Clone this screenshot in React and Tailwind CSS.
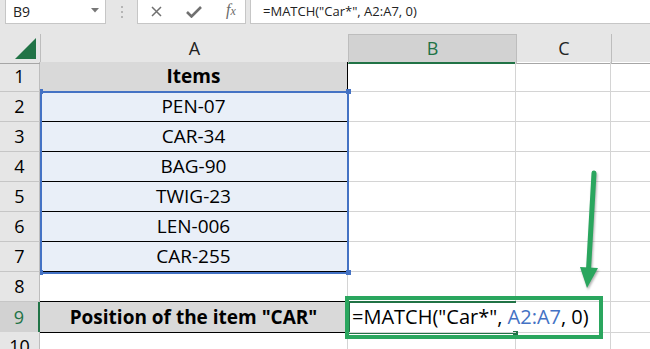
import React from 'react';

const rows = [
    { n: 1, a: 'Items', kind: 'head' },
    { n: 2, a: 'PEN-07', kind: 'item' },
    { n: 3, a: 'CAR-34', kind: 'item' },
    { n: 4, a: 'BAG-90', kind: 'item' },
    { n: 5, a: 'TWIG-23', kind: 'item' },
    { n: 6, a: 'LEN-006', kind: 'item' },
    { n: 7, a: 'CAR-255', kind: 'item' },
    { n: 8, a: '', kind: 'gap' },
    { n: 9, a: 'Position of the item "CAR"', kind: 'result' },
    { n: 10, a: '', kind: 'empty' },
];

const aCellClass = {
    head: 'bg-[#d9d9d9] font-bold border-r border-b border-black',
    item: 'bg-[#e9eff8] border-r border-b border-black',
    gap: 'border-r border-r-[#d4d4d4] border-b border-b-black',
    result: 'bg-[#d9d9d9] font-bold border-r border-b border-black',
    empty: 'border-r border-b border-[#d4d4d4]',
};

const FormulaBar = () => (
    <div className="flex h-6 items-stretch">
        {/* Name box */}
        <div className="ml-[5px] w-[101px] bg-white border-x border-b border-[#c6c6c6] flex items-center justify-between pl-[7px] pr-[6px]">
            <span className="text-[14px] text-[#222]">B9</span>
            <svg width="8" height="5" viewBox="0 0 8 5" className="mb-[2px]">
                <path d="M0 0 L8 0 L4 4.5 Z" fill="#777" />
            </svg>
        </div>
        {/* Dots */}
        <div className="w-[31px] flex flex-col items-center justify-start pt-[6px] gap-[3px]">
            <div className="w-[2px] h-[2px] bg-[#b5b5b5]" />
            <div className="w-[2px] h-[2px] bg-[#b5b5b5]" />
            <div className="w-[2px] h-[2px] bg-[#b5b5b5]" />
        </div>
        {/* Cancel / enter / fx */}
        <div className="w-[109px] bg-white border-x border-b border-[#c6c6c6] flex items-center pl-[13px] gap-[24px]">
            <svg width="11" height="11" viewBox="0 0 11 11">
                <path d="M1 1 L10 10 M10 1 L1 10" stroke="#707070" strokeWidth="1.5" />
            </svg>
            <svg width="16" height="12" viewBox="0 0 16 12">
                <path d="M1 6 L5.5 10.5 L15 1" stroke="#707070" strokeWidth="2.6" fill="none" />
            </svg>
            <span className="font-['Liberation_Serif',serif] italic text-[#6a6a6a] text-[16px] leading-none -mt-[3px]">
                f<span className="text-[12px]">x</span>
            </span>
        </div>
        {/* Formula */}
        <div className="ml-1 flex-1 bg-white border-l border-b border-[#c6c6c6] flex items-center pl-3">
            <span className="text-[13px] text-[#222] whitespace-nowrap">=MATCH("Car*", A2:A7, 0)</span>
        </div>
    </div>
);

const App = () => {
    return (
        <div className="relative w-[650px] h-[349px] overflow-hidden bg-[#e6e6e6] font-['Open_Sans',sans-serif] text-black">
            <FormulaBar />
            <div className="h-[10px]" />

            {/* Column headers */}
            <div className="grid grid-cols-[40px_308px_168px_95px_39px] h-[28px] text-[18px] text-[#222]">
                <div className="relative border-b border-[#a6a6a6]">
                    <svg width="22" height="22" viewBox="0 0 22 22" className="absolute left-[15px] top-[4px]">
                        <path d="M0 21 L21 21 L21 0 Z" fill="#217346" />
                    </svg>
                </div>
                <div className="border-l border-[#bdbdbd] border-b border-b-[#a6a6a6] flex items-center justify-center">A</div>
                <div className="bg-[#d2d2d2] border-t border-l border-[#bdbdbd] border-b-2 border-b-[#217346] flex items-center justify-center text-[#217346]">B</div>
                <div className="border-l border-[#bdbdbd] border-b border-b-[#a6a6a6] flex items-center justify-center">C</div>
                <div className="border-l border-[#bdbdbd] border-b border-b-[#a6a6a6]" />
            </div>

            {/* Rows */}
            <div className="bg-white">
                {rows.map((row) => (
                    <div key={row.n} className="grid grid-cols-[40px_308px_168px_95px_39px] h-[30px] text-[19px]">
                        <div
                            className={
                                row.n === 9
                                    ? 'bg-[#d2d2d2] text-[#217346] border-b border-[#c6c6c6] border-r-2 border-r-[#217346] flex items-center justify-center text-[18px]'
                                    : 'bg-[#e6e6e6] border-b border-[#c6c6c6] border-r border-r-[#bdbdbd] flex items-center justify-center text-[18px]'
                            }
                        >
                            {row.n}
                        </div>
                        <div className={`${aCellClass[row.kind]} flex items-center justify-center whitespace-nowrap`}>
                            {row.a}
                        </div>
                        {row.n === 9 ? (
                            <div className="relative z-10 border-b border-[#d4d4d4] flex items-center pl-[4px] whitespace-pre text-[20px]">
                                <span>{'=MATCH("Car*", '}</span>
                                <span className="text-[#4472c4]">A2:A7</span>
                                <span>{', 0)'}</span>
                                <span className="ml-[3px] w-px h-[23px] bg-black" />
                            </div>
                        ) : (
                            <div className="border-r border-b border-[#d4d4d4]" />
                        )}
                        <div className="border-r border-b border-[#d4d4d4]" />
                        <div className="border-b border-[#d4d4d4]" />
                    </div>
                ))}
            </div>

            {/* Range highlight A2:A7 */}
            <div className="absolute left-[40px] top-[91px] w-[309px] h-[183px] border-2 border-[#4472c4]" />
            <div className="absolute left-[40px] top-[89px] w-[3px] h-[5px] bg-[#4472c4]" />
            <div className="absolute left-[346px] top-[89px] w-[5px] h-[5px] bg-[#4472c4]" />
            <div className="absolute left-[40px] top-[270px] w-[3px] h-[5px] bg-[#4472c4]" />
            <div className="absolute left-[346px] top-[270px] w-[5px] h-[5px] bg-[#4472c4]" />

            {/* Active cell B9 */}
            <div className="absolute left-[348px] top-[301px] w-[168px] h-[33px] border-t-2 border-b-2 border-l-2 border-[#217346]" />
            <div className="absolute left-[513px] top-[331px] w-[5px] h-[5px] bg-[#217346]" />

            {/* Annotation */}
            <div className="absolute z-20 left-[345px] top-[296px] w-[258px] h-[43px] border-4 border-[#2aa65e]" />
            <svg
                width="30"
                height="125"
                viewBox="0 0 30 125"
                className="absolute left-[572px] top-[168px] drop-shadow-[1px_2px_1px_rgba(0,0,0,0.3)]"
            >
                <path d="M22 5 L16.5 102" stroke="#2aa65e" strokeWidth="5" strokeLinecap="round" />
                <path d="M8 99 L26 100 L15 120 Z" fill="#2aa65e" />
            </svg>
        </div>
    );
};

export default App;
